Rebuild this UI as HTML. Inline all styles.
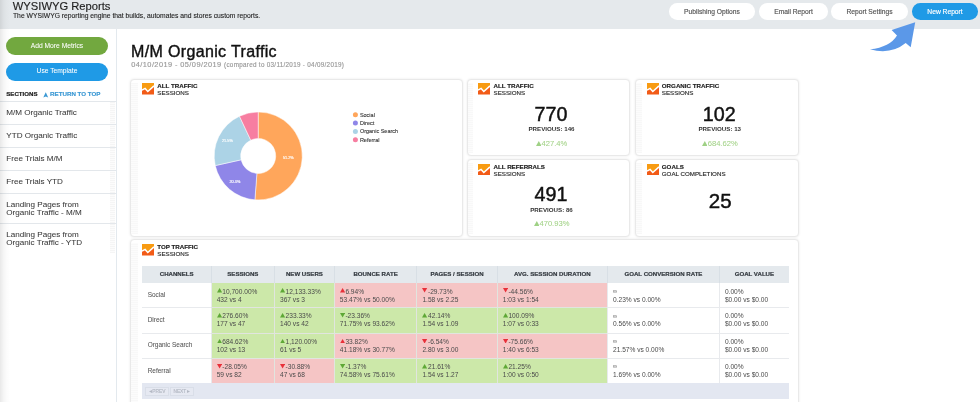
<!DOCTYPE html>
<html><head><meta charset="utf-8">
<style>
*{box-sizing:border-box;margin:0;padding:0}
html,body{width:980px;height:402px;overflow:hidden;background:#fff;font-family:"Liberation Sans",sans-serif;color:#222}
body{will-change:transform;-webkit-text-stroke-width:0.15px}
.abs{position:absolute}
#hdr{position:absolute;left:0;top:0;width:980px;height:28.5px;background:#e5e9ec}
#shadow{position:absolute;left:0;top:0;width:10px;height:402px;background:linear-gradient(to right,rgba(0,0,0,.09),rgba(0,0,0,.04) 35%,rgba(0,0,0,.015) 65%,rgba(0,0,0,0))}
.t{position:absolute;white-space:nowrap;line-height:1}
.hbtn{position:absolute;top:3.2px;height:16.6px;border-radius:8.3px;padding-top:0.2px;background:#fff;color:#555;font-size:6.7px;display:flex;align-items:center;justify-content:center}
.sbtn{position:absolute;left:6px;width:102px;height:18px;border-radius:9px;color:#fff;font-size:6.7px;display:flex;align-items:center;justify-content:center;padding-bottom:1.2px;-webkit-text-stroke-width:0.05px}
#side{position:absolute;left:0;top:28.5px;width:116.5px;height:374px;border-right:1.5px solid #e3e9ee}
.sitem{position:absolute;left:0;width:115.5px;border-top:1px solid #e3e7eb;font-size:8.1px;color:#3a3a3a;-webkit-text-stroke:0.06px #3a3a3a}
.card{position:absolute;background:#fff;border:1px solid #e9e9e9;border-radius:4px;box-shadow:0 0 2.5px rgba(0,0,0,.09)}
.strip{position:absolute;top:3px;bottom:1.5px;left:0;width:7px;background:repeating-linear-gradient(0deg,#f8f8f8 0 1px,#fcfcfc 1px 2px)}
.ico{position:absolute;width:12px;height:11.5px}
.ct{position:absolute;font-size:6.2px;font-weight:bold;color:#222;line-height:6.9px;white-space:nowrap}
.ct span{font-weight:normal;color:#2a2a2a;-webkit-text-stroke:0.15px #2a2a2a}
.th{position:absolute;top:266.3px;height:16.4px;line-height:16.4px;text-align:center;font-size:6.1px;font-weight:bold;color:#343a40;-webkit-text-stroke-width:0.2px;white-space:nowrap}
.td1{position:absolute;font-size:6.45px;color:#555;-webkit-text-stroke-width:0.05px;white-space:nowrap;line-height:1}
.td{position:absolute;font-size:6.6px;color:#4a4a4a;-webkit-text-stroke-width:0;white-space:nowrap;line-height:8.1px}
.pg{position:absolute;top:386.8px;height:9.6px;border:1px solid #d9dee8;background:#e6e9f2;font-size:4.8px;color:#b4b9c4;text-align:center;line-height:7.6px}
</style></head><body>
<div id="hdr"></div>
<div class="t" style="left:12.8px;top:0.8px;font-size:11.2px;color:#1e1e1e;-webkit-text-stroke:0.15px #1e1e1e">WYSIWYG Reports</div>
<div class="t" style="left:13px;top:13.1px;font-size:6.75px;color:#222;-webkit-text-stroke:0.1px #222">The WYSIWYG reporting engine that builds, automates and stores custom reports.</div>
<div class="hbtn" style="left:669px;width:86px">Publishing Options</div>
<div class="hbtn" style="left:759px;width:69px">Email Report</div>
<div class="hbtn" style="left:831px;width:77px">Report Settings</div>
<div class="hbtn" style="left:912px;width:66px;background:#1f9ae6;color:#fff">New Report</div>

<div id="side"></div>
<div class="sbtn" style="top:37px;background:#72a83f">Add More Metrics</div>
<div class="sbtn" style="top:62.5px;background:#1f9ae6">Use Template</div>
<div class="t" style="left:6.3px;top:91.1px;font-size:6.1px;font-weight:bold;color:#1a1a1a;-webkit-text-stroke:0.2px #1a1a1a">SECTIONS</div>
<svg class="abs" style="left:43px;top:91.5px" width="5.5" height="6" viewBox="0 0 5.5 6"><path d="M0.3 5.5L2.75 0.2 5.2 5.5 2.75 4.5Z" fill="#3a98d4"/></svg><div class="t" style="left:50.1px;top:91.2px;font-size:6.2px;font-weight:bold;color:#3a98d4;-webkit-text-stroke:0.15px #3a98d4">RETURN TO TOP</div>


<div class="abs" style="left:110px;top:101px;width:5px;height:152px;background:repeating-linear-gradient(0deg,#f5f5f5 0 1px,#fcfcfc 1px 2px)"></div>
<div class="sitem" style="top:101px;height:23.3px"><div class="t" style="left:6.3px;top:6.6px">M/M Organic Traffic</div></div>
<div class="sitem" style="top:124.3px;height:23px"><div class="t" style="left:6.3px;top:6.6px">YTD Organic Traffic</div></div>
<div class="sitem" style="top:147.3px;height:23px"><div class="t" style="left:6.3px;top:6.6px">Free Trials M/M</div></div>
<div class="sitem" style="top:170.3px;height:23px"><div class="t" style="left:6.3px;top:6.6px">Free Trials YTD</div></div>
<div class="sitem" style="top:193.3px;height:30px"><div class="t" style="left:6.3px;top:7px;line-height:7.3px">Landing Pages from<br>Organic Traffic - M/M</div></div>
<div class="sitem" style="top:223.3px;height:30px"><div class="t" style="left:6.3px;top:7px;line-height:7.3px">Landing Pages from<br>Organic Traffic - YTD</div></div>


<div class="t" style="left:131px;top:43.9px;font-size:16px;letter-spacing:0.35px;color:#111;-webkit-text-stroke:0.4px #111">M/M Organic Traffic</div>
<div class="t" style="left:131.3px;top:61.4px;font-size:7.4px;letter-spacing:0.42px;color:#999">04/10/2019 - 05/09/2019 <span style="font-size:6.3px;letter-spacing:0.3px">(compared to 03/11/2019 - 04/09/2019)</span></div>

<div class="card" style="left:130px;top:78.5px;width:332.5px;height:158px"><div class="strip"></div></div>
<svg class="ico" style="left:142px;top:83px" viewBox="0 0 12 11.5"><rect width="12" height="11.5" fill="#f25b17"/><path d="M0 0H12V2.9L5.8 8.5 3.1 5.4 0 7.2Z" fill="#f89b12"/><path d="M0 7.2 3.1 5.4 5.8 8.5 12 2.9" fill="none" stroke="#fff" stroke-width="1.5"/></svg>
<div class="ct" style="left:157.3px;top:82.9px">ALL TRAFFIC<br><span>SESSIONS</span></div>
<svg id="pie" class="abs" style="left:0;top:0" width="980" height="402" viewBox="0 0 980 402"><path d="M258.20 112.00A44 44 0 1 1 254.89 199.87L256.88 173.45A17.5 17.5 0 1 0 258.20 138.50Z" fill="#ffa65b" stroke="#fff" stroke-width="0.5"/><path d="M254.89 199.87A44 44 0 0 1 215.26 165.60L241.12 159.82A17.5 17.5 0 0 0 256.88 173.45Z" fill="#8f86e8" stroke="#fff" stroke-width="0.5"/><path d="M215.26 165.60A44 44 0 0 1 239.47 116.19L250.75 140.17A17.5 17.5 0 0 0 241.12 159.82Z" fill="#acd3e6" stroke="#fff" stroke-width="0.5"/><path d="M239.47 116.19A44 44 0 0 1 258.20 112.00L258.20 138.50A17.5 17.5 0 0 0 250.75 140.17Z" fill="#f77ea1" stroke="#fff" stroke-width="0.5"/><text x="288.3" y="158.6" text-anchor="middle" font-size="3.8" fill="#fff" stroke="#fff" stroke-width="0.15" font-family="Liberation Sans">51.2%</text><text x="234.9" y="182.8" text-anchor="middle" font-size="3.8" fill="#fff" stroke="#fff" stroke-width="0.15" font-family="Liberation Sans">20.3%</text><text x="227.4" y="142.4" text-anchor="middle" font-size="3.8" fill="#fff" stroke="#fff" stroke-width="0.15" font-family="Liberation Sans">21.5%</text><circle cx="355.4" cy="114.70" r="2.5" fill="#ffa65b"/><text x="359.9" y="116.70" font-size="5.5" fill="#333" stroke="#333" stroke-width="0.1" font-family="Liberation Sans">Social</text><circle cx="355.4" cy="123.07" r="2.5" fill="#8f86e8"/><text x="359.9" y="125.07" font-size="5.5" fill="#333" stroke="#333" stroke-width="0.1" font-family="Liberation Sans">Direct</text><circle cx="355.4" cy="131.44" r="2.5" fill="#acd3e6"/><text x="359.9" y="133.44" font-size="5.5" fill="#333" stroke="#333" stroke-width="0.1" font-family="Liberation Sans">Organic Search</text><circle cx="355.4" cy="139.81" r="2.5" fill="#f77ea1"/><text x="359.9" y="141.81" font-size="5.5" fill="#333" stroke="#333" stroke-width="0.1" font-family="Liberation Sans">Referral</text></svg>

<div class="card" style="left:467.2px;top:78.5px;width:163.3px;height:77px"><div class="strip" style="width:4.5px"></div></div>
<svg class="ico" style="left:478.3px;top:83px" viewBox="0 0 12 11.5"><rect width="12" height="11.5" fill="#f25b17"/><path d="M0 0H12V2.9L5.8 8.5 3.1 5.4 0 7.2Z" fill="#f89b12"/><path d="M0 7.2 3.1 5.4 5.8 8.5 12 2.9" fill="none" stroke="#fff" stroke-width="1.5"/></svg>
<div class="ct" style="left:493.5px;top:82.9px">ALL TRAFFIC<br><span>SESSIONS</span></div>
<div class="t" style="left:469.5px;width:163px;text-align:center;top:104.8px;font-size:19.7px;color:#111;-webkit-text-stroke:0.45px #111">770</div>
<div class="t" style="left:470.0px;width:163px;text-align:center;top:126px;font-size:6.2px;font-weight:bold;color:#333;-webkit-text-stroke-width:0">PREVIOUS: 146</div>
<div class="t" style="left:470.0px;width:163px;text-align:center;top:139.7px;font-size:7.6px;color:#a2d287;-webkit-text-stroke-width:0.05px"><svg width="5.6" height="5" viewBox="0 0 5.6 5" style="vertical-align:0px;margin-right:0.3px"><path d="M0 5L2.8 0 5.6 5Z" fill="#9fd185"/></svg>427.4%</div>

<div class="card" style="left:635.2px;top:78.5px;width:163.5px;height:77px"><div class="strip" style="width:5.5px"></div></div>
<svg class="ico" style="left:646.7px;top:83px" viewBox="0 0 12 11.5"><rect width="12" height="11.5" fill="#f25b17"/><path d="M0 0H12V2.9L5.8 8.5 3.1 5.4 0 7.2Z" fill="#f89b12"/><path d="M0 7.2 3.1 5.4 5.8 8.5 12 2.9" fill="none" stroke="#fff" stroke-width="1.5"/></svg>
<div class="ct" style="left:661.8px;top:82.9px">ORGANIC TRAFFIC<br><span>SESSIONS</span></div>
<div class="t" style="left:637.5px;width:163.5px;text-align:center;top:104.8px;font-size:19.7px;color:#111;-webkit-text-stroke:0.45px #111">102</div>
<div class="t" style="left:638.0px;width:163.5px;text-align:center;top:126px;font-size:6.2px;font-weight:bold;color:#333;-webkit-text-stroke-width:0">PREVIOUS: 13</div>
<div class="t" style="left:638.0px;width:163.5px;text-align:center;top:139.7px;font-size:7.6px;color:#a2d287;-webkit-text-stroke-width:0.05px"><svg width="5.6" height="5" viewBox="0 0 5.6 5" style="vertical-align:0px;margin-right:0.3px"><path d="M0 5L2.8 0 5.6 5Z" fill="#9fd185"/></svg>684.62%</div>

<div class="card" style="left:467.2px;top:158.8px;width:163.3px;height:78.2px"><div class="strip" style="width:4.5px"></div></div>
<svg class="ico" style="left:478.3px;top:163.9px" viewBox="0 0 12 11.5"><rect width="12" height="11.5" fill="#f25b17"/><path d="M0 0H12V2.9L5.8 8.5 3.1 5.4 0 7.2Z" fill="#f89b12"/><path d="M0 7.2 3.1 5.4 5.8 8.5 12 2.9" fill="none" stroke="#fff" stroke-width="1.5"/></svg>
<div class="ct" style="left:493.5px;top:163.8px">ALL REFERRALS<br><span>SESSIONS</span></div>
<div class="t" style="left:469.5px;width:163px;text-align:center;top:185.3px;font-size:19.7px;color:#111;-webkit-text-stroke:0.45px #111">491</div>
<div class="t" style="left:470.0px;width:163px;text-align:center;top:206.5px;font-size:6.2px;font-weight:bold;color:#333;-webkit-text-stroke-width:0">PREVIOUS: 86</div>
<div class="t" style="left:470.0px;width:163px;text-align:center;top:220.2px;font-size:7.6px;color:#a2d287;-webkit-text-stroke-width:0.05px"><svg width="5.6" height="5" viewBox="0 0 5.6 5" style="vertical-align:0px;margin-right:0.3px"><path d="M0 5L2.8 0 5.6 5Z" fill="#9fd185"/></svg>470.93%</div>

<div class="card" style="left:635.2px;top:158.8px;width:163.5px;height:78.2px"><div class="strip" style="width:5.5px"></div></div>
<svg class="ico" style="left:646.7px;top:163.9px" viewBox="0 0 12 11.5"><rect width="12" height="11.5" fill="#f25b17"/><path d="M0 0H12V2.9L5.8 8.5 3.1 5.4 0 7.2Z" fill="#f89b12"/><path d="M0 7.2 3.1 5.4 5.8 8.5 12 2.9" fill="none" stroke="#fff" stroke-width="1.5"/></svg>
<div class="ct" style="left:661.8px;top:163.8px">GOALS<br><span>GOAL COMPLETIONS</span></div>
<div class="t" style="left:638.5px;width:163.5px;text-align:center;top:190.8px;font-size:20.5px;color:#111;-webkit-text-stroke:0.45px #111">25</div>

<div class="card" style="left:130px;top:239.2px;width:669px;height:170px"><div class="strip"></div></div>
<svg class="ico" style="left:142px;top:244.3px" viewBox="0 0 12 11.5"><rect width="12" height="11.5" fill="#f25b17"/><path d="M0 0H12V2.9L5.8 8.5 3.1 5.4 0 7.2Z" fill="#f89b12"/><path d="M0 7.2 3.1 5.4 5.8 8.5 12 2.9" fill="none" stroke="#fff" stroke-width="1.5"/></svg>
<div class="ct" style="left:157.3px;top:244.2px">TOP TRAFFIC<br><span>SESSIONS</span></div>
<!--T--><div class="abs" style="left:142.2px;top:266.3px;width:647.2px;height:16.4px;background:#e4e9ed"></div>
<div class="th" style="left:142.2px;width:69.0px">CHANNELS</div>
<div class="abs" style="left:210.7px;top:266.3px;width:1px;height:16.4px;background:#d8dfe5"></div>
<div class="th" style="left:211.2px;width:63.3px">SESSIONS</div>
<div class="abs" style="left:274.0px;top:266.3px;width:1px;height:16.4px;background:#d8dfe5"></div>
<div class="th" style="left:274.5px;width:59.8px">NEW USERS</div>
<div class="abs" style="left:333.8px;top:266.3px;width:1px;height:16.4px;background:#d8dfe5"></div>
<div class="th" style="left:334.3px;width:82.6px">BOUNCE RATE</div>
<div class="abs" style="left:416.4px;top:266.3px;width:1px;height:16.4px;background:#d8dfe5"></div>
<div class="th" style="left:416.9px;width:80.4px">PAGES / SESSION</div>
<div class="abs" style="left:496.8px;top:266.3px;width:1px;height:16.4px;background:#d8dfe5"></div>
<div class="th" style="left:497.3px;width:110.2px">AVG. SESSION DURATION</div>
<div class="abs" style="left:607.0px;top:266.3px;width:1px;height:16.4px;background:#d8dfe5"></div>
<div class="th" style="left:607.5px;width:111.9px">GOAL CONVERSION RATE</div>
<div class="abs" style="left:718.9px;top:266.3px;width:1px;height:16.4px;background:#d8dfe5"></div>
<div class="th" style="left:719.4px;width:70.0px">GOAL VALUE</div>
<div class="abs" style="left:211.2px;top:282.7px;width:63.3px;height:24.9px;background:#cce8a9"></div>
<div class="abs" style="left:274.5px;top:282.7px;width:59.8px;height:24.9px;background:#cce8a9"></div>
<div class="abs" style="left:334.3px;top:282.7px;width:82.6px;height:24.9px;background:#f5c5c5"></div>
<div class="abs" style="left:416.9px;top:282.7px;width:80.4px;height:24.9px;background:#f5c5c5"></div>
<div class="abs" style="left:497.3px;top:282.7px;width:110.2px;height:24.9px;background:#f5c5c5"></div>
<div class="abs" style="left:211.2px;top:307.6px;width:63.3px;height:25.4px;background:#cce8a9"></div>
<div class="abs" style="left:274.5px;top:307.6px;width:59.8px;height:25.4px;background:#cce8a9"></div>
<div class="abs" style="left:334.3px;top:307.6px;width:82.6px;height:25.4px;background:#cce8a9"></div>
<div class="abs" style="left:416.9px;top:307.6px;width:80.4px;height:25.4px;background:#cce8a9"></div>
<div class="abs" style="left:497.3px;top:307.6px;width:110.2px;height:25.4px;background:#cce8a9"></div>
<div class="abs" style="left:211.2px;top:333.0px;width:63.3px;height:25.4px;background:#cce8a9"></div>
<div class="abs" style="left:274.5px;top:333.0px;width:59.8px;height:25.4px;background:#cce8a9"></div>
<div class="abs" style="left:334.3px;top:333.0px;width:82.6px;height:25.4px;background:#f5c5c5"></div>
<div class="abs" style="left:416.9px;top:333.0px;width:80.4px;height:25.4px;background:#f5c5c5"></div>
<div class="abs" style="left:497.3px;top:333.0px;width:110.2px;height:25.4px;background:#f5c5c5"></div>
<div class="abs" style="left:211.2px;top:358.4px;width:63.3px;height:24.8px;background:#f5c5c5"></div>
<div class="abs" style="left:274.5px;top:358.4px;width:59.8px;height:24.8px;background:#f5c5c5"></div>
<div class="abs" style="left:334.3px;top:358.4px;width:82.6px;height:24.8px;background:#cce8a9"></div>
<div class="abs" style="left:416.9px;top:358.4px;width:80.4px;height:24.8px;background:#cce8a9"></div>
<div class="abs" style="left:497.3px;top:358.4px;width:110.2px;height:24.8px;background:#cce8a9"></div>
<div class="abs" style="left:142.2px;top:307.1px;width:647.2px;height:1px;background:#e8eaed"></div>
<div class="abs" style="left:142.2px;top:332.5px;width:647.2px;height:1px;background:#e8eaed"></div>
<div class="abs" style="left:142.2px;top:357.9px;width:647.2px;height:1px;background:#e8eaed"></div>
<div class="abs" style="left:142.2px;top:382.7px;width:647.2px;height:1px;background:#e8eaed"></div>
<div class="abs" style="left:210.7px;top:282.7px;width:1px;height:100.5px;background:#e8eaed"></div>
<div class="abs" style="left:274.0px;top:282.7px;width:1px;height:100.5px;background:#e8eaed"></div>
<div class="abs" style="left:333.8px;top:282.7px;width:1px;height:100.5px;background:#e8eaed"></div>
<div class="abs" style="left:416.4px;top:282.7px;width:1px;height:100.5px;background:#e8eaed"></div>
<div class="abs" style="left:496.8px;top:282.7px;width:1px;height:100.5px;background:#e8eaed"></div>
<div class="abs" style="left:607.0px;top:282.7px;width:1px;height:100.5px;background:#e8eaed"></div>
<div class="abs" style="left:718.9px;top:282.7px;width:1px;height:100.5px;background:#e8eaed"></div>
<div class="abs" style="left:274.0px;top:282.7px;width:1px;height:24.9px;background:#e1e5df"></div>
<div class="abs" style="left:211.2px;top:307.1px;width:63.3px;height:1px;background:#e1e5df"></div>
<div class="abs" style="left:333.8px;top:282.7px;width:1px;height:24.9px;background:#e1e5df"></div>
<div class="abs" style="left:274.5px;top:307.1px;width:59.8px;height:1px;background:#e1e5df"></div>
<div class="abs" style="left:416.4px;top:282.7px;width:1px;height:24.9px;background:#e1e5df"></div>
<div class="abs" style="left:334.3px;top:307.1px;width:82.6px;height:1px;background:#e1e5df"></div>
<div class="abs" style="left:496.8px;top:282.7px;width:1px;height:24.9px;background:#e1e5df"></div>
<div class="abs" style="left:416.9px;top:307.1px;width:80.4px;height:1px;background:#e1e5df"></div>
<div class="abs" style="left:497.3px;top:307.1px;width:110.2px;height:1px;background:#e1e5df"></div>
<div class="abs" style="left:274.0px;top:307.6px;width:1px;height:25.4px;background:#e1e5df"></div>
<div class="abs" style="left:211.2px;top:332.5px;width:63.3px;height:1px;background:#e1e5df"></div>
<div class="abs" style="left:333.8px;top:307.6px;width:1px;height:25.4px;background:#e1e5df"></div>
<div class="abs" style="left:274.5px;top:332.5px;width:59.8px;height:1px;background:#e1e5df"></div>
<div class="abs" style="left:416.4px;top:307.6px;width:1px;height:25.4px;background:#e1e5df"></div>
<div class="abs" style="left:334.3px;top:332.5px;width:82.6px;height:1px;background:#e1e5df"></div>
<div class="abs" style="left:496.8px;top:307.6px;width:1px;height:25.4px;background:#e1e5df"></div>
<div class="abs" style="left:416.9px;top:332.5px;width:80.4px;height:1px;background:#e1e5df"></div>
<div class="abs" style="left:497.3px;top:332.5px;width:110.2px;height:1px;background:#e1e5df"></div>
<div class="abs" style="left:274.0px;top:333.0px;width:1px;height:25.4px;background:#e1e5df"></div>
<div class="abs" style="left:211.2px;top:357.9px;width:63.3px;height:1px;background:#e1e5df"></div>
<div class="abs" style="left:333.8px;top:333.0px;width:1px;height:25.4px;background:#e1e5df"></div>
<div class="abs" style="left:274.5px;top:357.9px;width:59.8px;height:1px;background:#e1e5df"></div>
<div class="abs" style="left:416.4px;top:333.0px;width:1px;height:25.4px;background:#e1e5df"></div>
<div class="abs" style="left:334.3px;top:357.9px;width:82.6px;height:1px;background:#e1e5df"></div>
<div class="abs" style="left:496.8px;top:333.0px;width:1px;height:25.4px;background:#e1e5df"></div>
<div class="abs" style="left:416.9px;top:357.9px;width:80.4px;height:1px;background:#e1e5df"></div>
<div class="abs" style="left:497.3px;top:357.9px;width:110.2px;height:1px;background:#e1e5df"></div>
<div class="abs" style="left:274.0px;top:358.4px;width:1px;height:24.8px;background:#e1e5df"></div>
<div class="abs" style="left:333.8px;top:358.4px;width:1px;height:24.8px;background:#e1e5df"></div>
<div class="abs" style="left:416.4px;top:358.4px;width:1px;height:24.8px;background:#e1e5df"></div>
<div class="abs" style="left:496.8px;top:358.4px;width:1px;height:24.8px;background:#e1e5df"></div>
<div class="td1" style="left:147.7px;top:292.0px">Social</div>
<div class="td" style="left:216.7px;top:287.5px"><svg width="5.2" height="4.6" viewBox="0 0 5.2 4.6" style="vertical-align:0.6px;margin-right:0.4px"><path d="M0 4.6L2.6 0 5.2 4.6Z" fill="#5ea836"/></svg>10,700.00%<br>432 vs 4</div>
<div class="td" style="left:280.0px;top:287.5px"><svg width="5.2" height="4.6" viewBox="0 0 5.2 4.6" style="vertical-align:0.6px;margin-right:0.4px"><path d="M0 4.6L2.6 0 5.2 4.6Z" fill="#5ea836"/></svg>12,133.33%<br>367 vs 3</div>
<div class="td" style="left:339.8px;top:287.5px"><svg width="5.2" height="4.6" viewBox="0 0 5.2 4.6" style="vertical-align:0.6px;margin-right:0.4px"><path d="M0 4.6L2.6 0 5.2 4.6Z" fill="#e8303a"/></svg>6.94%<br>53.47% vs 50.00%</div>
<div class="td" style="left:422.4px;top:287.5px"><svg width="5.2" height="4.6" viewBox="0 0 5.2 4.6" style="vertical-align:0.6px;margin-right:0.4px"><path d="M0 0L2.6 4.6 5.2 0Z" fill="#e8303a"/></svg>-29.73%<br>1.58 vs 2.25</div>
<div class="td" style="left:502.8px;top:287.5px"><svg width="5.2" height="4.6" viewBox="0 0 5.2 4.6" style="vertical-align:0.6px;margin-right:0.4px"><path d="M0 0L2.6 4.6 5.2 0Z" fill="#e8303a"/></svg>-44.56%<br>1:03 vs 1:54</div>
<div class="td" style="left:613.0px;top:287.5px"><span style="font-size:5.6px;position:relative;top:-0.9px">&infin;</span><br>0.23% vs 0.00%</div>
<div class="td" style="left:724.9px;top:287.5px">0.00%<br>$0.00 vs $0.00</div>
<div class="td1" style="left:147.7px;top:316.9px">Direct</div>
<div class="td" style="left:216.7px;top:312.4px"><svg width="5.2" height="4.6" viewBox="0 0 5.2 4.6" style="vertical-align:0.6px;margin-right:0.4px"><path d="M0 4.6L2.6 0 5.2 4.6Z" fill="#5ea836"/></svg>276.60%<br>177 vs 47</div>
<div class="td" style="left:280.0px;top:312.4px"><svg width="5.2" height="4.6" viewBox="0 0 5.2 4.6" style="vertical-align:0.6px;margin-right:0.4px"><path d="M0 4.6L2.6 0 5.2 4.6Z" fill="#5ea836"/></svg>233.33%<br>140 vs 42</div>
<div class="td" style="left:339.8px;top:312.4px"><svg width="5.2" height="4.6" viewBox="0 0 5.2 4.6" style="vertical-align:0.6px;margin-right:0.4px"><path d="M0 0L2.6 4.6 5.2 0Z" fill="#5ea836"/></svg>-23.36%<br>71.75% vs 93.62%</div>
<div class="td" style="left:422.4px;top:312.4px"><svg width="5.2" height="4.6" viewBox="0 0 5.2 4.6" style="vertical-align:0.6px;margin-right:0.4px"><path d="M0 4.6L2.6 0 5.2 4.6Z" fill="#5ea836"/></svg>42.14%<br>1.54 vs 1.09</div>
<div class="td" style="left:502.8px;top:312.4px"><svg width="5.2" height="4.6" viewBox="0 0 5.2 4.6" style="vertical-align:0.6px;margin-right:0.4px"><path d="M0 4.6L2.6 0 5.2 4.6Z" fill="#5ea836"/></svg>100.09%<br>1:07 vs 0:33</div>
<div class="td" style="left:613.0px;top:312.4px"><span style="font-size:5.6px;position:relative;top:-0.9px">&infin;</span><br>0.56% vs 0.00%</div>
<div class="td" style="left:724.9px;top:312.4px">0.00%<br>$0.00 vs $0.00</div>
<div class="td1" style="left:147.7px;top:342.3px">Organic Search</div>
<div class="td" style="left:216.7px;top:337.8px"><svg width="5.2" height="4.6" viewBox="0 0 5.2 4.6" style="vertical-align:0.6px;margin-right:0.4px"><path d="M0 4.6L2.6 0 5.2 4.6Z" fill="#5ea836"/></svg>684.62%<br>102 vs 13</div>
<div class="td" style="left:280.0px;top:337.8px"><svg width="5.2" height="4.6" viewBox="0 0 5.2 4.6" style="vertical-align:0.6px;margin-right:0.4px"><path d="M0 4.6L2.6 0 5.2 4.6Z" fill="#5ea836"/></svg>1,120.00%<br>61 vs 5</div>
<div class="td" style="left:339.8px;top:337.8px"><svg width="5.2" height="4.6" viewBox="0 0 5.2 4.6" style="vertical-align:0.6px;margin-right:0.4px"><path d="M0 4.6L2.6 0 5.2 4.6Z" fill="#e8303a"/></svg>33.82%<br>41.18% vs 30.77%</div>
<div class="td" style="left:422.4px;top:337.8px"><svg width="5.2" height="4.6" viewBox="0 0 5.2 4.6" style="vertical-align:0.6px;margin-right:0.4px"><path d="M0 0L2.6 4.6 5.2 0Z" fill="#e8303a"/></svg>-6.54%<br>2.80 vs 3.00</div>
<div class="td" style="left:502.8px;top:337.8px"><svg width="5.2" height="4.6" viewBox="0 0 5.2 4.6" style="vertical-align:0.6px;margin-right:0.4px"><path d="M0 0L2.6 4.6 5.2 0Z" fill="#e8303a"/></svg>-75.66%<br>1:40 vs 6:53</div>
<div class="td" style="left:613.0px;top:337.8px"><span style="font-size:5.6px;position:relative;top:-0.9px">&infin;</span><br>21.57% vs 0.00%</div>
<div class="td" style="left:724.9px;top:337.8px">0.00%<br>$0.00 vs $0.00</div>
<div class="td1" style="left:147.7px;top:367.7px">Referral</div>
<div class="td" style="left:216.7px;top:363.2px"><svg width="5.2" height="4.6" viewBox="0 0 5.2 4.6" style="vertical-align:0.6px;margin-right:0.4px"><path d="M0 0L2.6 4.6 5.2 0Z" fill="#e8303a"/></svg>-28.05%<br>59 vs 82</div>
<div class="td" style="left:280.0px;top:363.2px"><svg width="5.2" height="4.6" viewBox="0 0 5.2 4.6" style="vertical-align:0.6px;margin-right:0.4px"><path d="M0 0L2.6 4.6 5.2 0Z" fill="#e8303a"/></svg>-30.88%<br>47 vs 68</div>
<div class="td" style="left:339.8px;top:363.2px"><svg width="5.2" height="4.6" viewBox="0 0 5.2 4.6" style="vertical-align:0.6px;margin-right:0.4px"><path d="M0 0L2.6 4.6 5.2 0Z" fill="#5ea836"/></svg>-1.37%<br>74.58% vs 75.61%</div>
<div class="td" style="left:422.4px;top:363.2px"><svg width="5.2" height="4.6" viewBox="0 0 5.2 4.6" style="vertical-align:0.6px;margin-right:0.4px"><path d="M0 4.6L2.6 0 5.2 4.6Z" fill="#5ea836"/></svg>21.61%<br>1.54 vs 1.27</div>
<div class="td" style="left:502.8px;top:363.2px"><svg width="5.2" height="4.6" viewBox="0 0 5.2 4.6" style="vertical-align:0.6px;margin-right:0.4px"><path d="M0 4.6L2.6 0 5.2 4.6Z" fill="#5ea836"/></svg>21.25%<br>1:00 vs 0:50</div>
<div class="td" style="left:613.0px;top:363.2px"><span style="font-size:5.6px;position:relative;top:-0.9px">&infin;</span><br>1.69% vs 0.00%</div>
<div class="td" style="left:724.9px;top:363.2px">0.00%<br>$0.00 vs $0.00</div>
<div class="abs" style="left:142.2px;top:383.2px;width:647.2px;height:15.5px;background:#e3e7f1"></div>
<div class="pg" style="left:145.2px;width:24px"><svg width="3" height="3" viewBox="0 0 3 3" style="vertical-align:0.3px;margin-right:0.3px"><path d="M0 1.5L3 0 3 3Z" fill="#b4b9c4"/></svg>PREV</div><div class="pg" style="left:169.5px;width:24px">NEXT<svg width="3" height="3" viewBox="0 0 3 3" style="vertical-align:0.3px;margin-left:0.3px"><path d="M3 1.5L0 0 0 3Z" fill="#b4b9c4"/></svg></div><!--/T-->
<svg class="abs" style="left:0;top:0" width="980" height="402" viewBox="0 0 980 402"><path d="M915.2 22.2L891.6 29.9L897 35.4Q890 47 870 49.3Q891 55 905.7 43L910.7 47.3Z" fill="#5b98e8"/></svg>
<div id="shadow"></div>
</body></html>
